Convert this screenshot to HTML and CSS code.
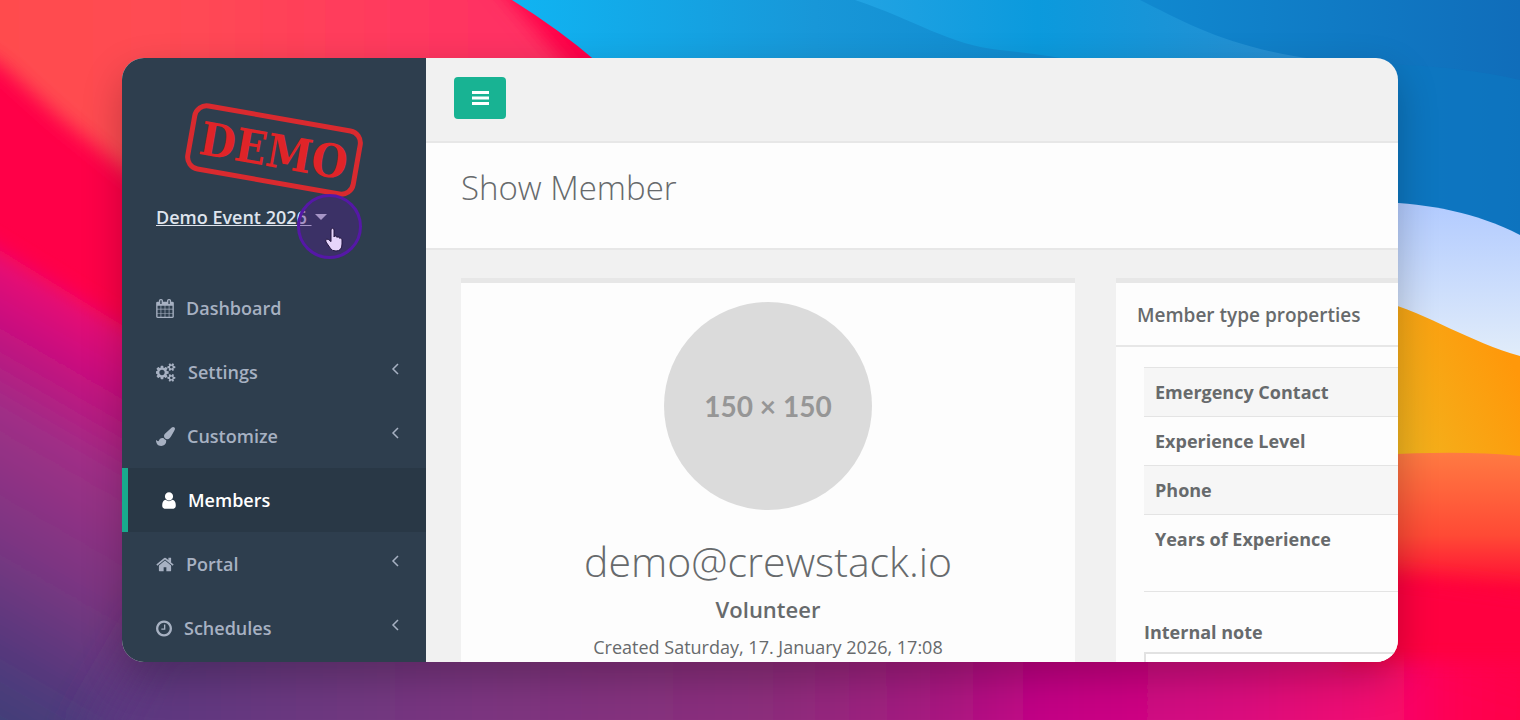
FILE: index.html
```
<!DOCTYPE html>
<html lang="en">
<head>
    <meta charset="UTF-8">
    <meta name="viewport" content="width=device-width, initial-scale=1">
    <title>Show Member</title>
    <link rel="stylesheet" href="styles.css">
</head>
<body>
<div class="desktop">
    <svg class="wallpaper" viewBox="0 0 1520 720" preserveAspectRatio="none" aria-hidden="true">
        <defs>
            <linearGradient id="blue" x1="512" y1="0" x2="1520" y2="0" gradientUnits="userSpaceOnUse">
                <stop offset="0" stop-color="#10b4f2"/>
                <stop offset=".3" stop-color="#1897d8"/>
                <stop offset=".6" stop-color="#0e86cc"/>
                <stop offset="1" stop-color="#1070bd"/>
            </linearGradient>
            <linearGradient id="wave" x1="855" y1="0" x2="1310" y2="0" gradientUnits="userSpaceOnUse">
                <stop offset="0" stop-color="#22a3e3"/>
                <stop offset=".4" stop-color="#0b9add"/>
                <stop offset="1" stop-color="#2a8dd0"/>
            </linearGradient>
            <linearGradient id="deep" x1="1140" y1="0" x2="1520" y2="0" gradientUnits="userSpaceOnUse">
                <stop offset="0" stop-color="#1089d0"/>
                <stop offset="1" stop-color="#106dba"/>
            </linearGradient>
            <linearGradient id="ice" x1="0" y1="203" x2="0" y2="350" gradientUnits="userSpaceOnUse">
                <stop offset="0" stop-color="#b2cbff"/>
                <stop offset="1" stop-color="#dfebfa"/>
            </linearGradient>
            <linearGradient id="orange" x1="1390" y1="440" x2="1520" y2="380" gradientUnits="userSpaceOnUse">
                <stop offset="0" stop-color="#f2b41e"/>
                <stop offset="1" stop-color="#ff980a"/>
            </linearGradient>
            <linearGradient id="coral" x1="0" y1="453" x2="0" y2="590" gradientUnits="userSpaceOnUse">
                <stop offset="0" stop-color="#ff7a42"/>
                <stop offset=".6" stop-color="#ff4a35"/>
                <stop offset="1" stop-color="#ff0636"/>
            </linearGradient>
            <linearGradient id="rose" x1="0" y1="0" x2="500" y2="0" gradientUnits="userSpaceOnUse">
                <stop offset="0" stop-color="#ff4c4e"/>
                <stop offset=".3" stop-color="#ff4c52"/>
                <stop offset="1" stop-color="#ff3163"/>
            </linearGradient>
            <!-- runs across the folds, which fall about 35 degrees to the right -->
            <linearGradient id="folds" x1="0" y1="240" x2="-213" y2="609" gradientUnits="userSpaceOnUse">
                <stop offset="0" stop-color="#f4086c"/>
                <stop offset=".12" stop-color="#d40a7c"/>
                <stop offset=".2" stop-color="#c01480"/>
                <stop offset=".34" stop-color="#a02e86"/>
                <stop offset=".6" stop-color="#7c3682"/>
                <stop offset=".84" stop-color="#54397c"/>
                <stop offset="1" stop-color="#3f4078"/>
            </linearGradient>
            <linearGradient id="floor" x1="0" y1="0" x2="1520" y2="0" gradientUnits="userSpaceOnUse">
                <stop offset="0" stop-color="#453c75"/>
                <stop offset=".06" stop-color="#583980"/>
                <stop offset=".3" stop-color="#7a3680"/>
                <stop offset=".52" stop-color="#8e2c7c"/>
                <stop offset=".62" stop-color="#a81880"/>
                <stop offset=".68" stop-color="#c20486"/>
                <stop offset=".8" stop-color="#d60880"/>
                <stop offset=".91" stop-color="#f40a70"/>
                <stop offset=".95" stop-color="#ff0054"/>
                <stop offset="1" stop-color="#ff0048"/>
            </linearGradient>
            <filter id="soft" x="-20%" y="-20%" width="140%" height="140%">
                <feGaussianBlur stdDeviation="10"/>
            </filter>
            <filter id="softer" x="-20%" y="-50%" width="140%" height="200%">
                <feGaussianBlur stdDeviation="24"/>
            </filter>
        </defs>
        <rect width="1520" height="720" fill="#ff0048"/>
        <!-- magenta to indigo folds, bottom left -->
        <path filter="url(#soft)" fill="url(#folds)" d="M-60 212L0 250L122 325L700 660L700 800L-60 800Z"/>
        <path filter="url(#softer)" fill="url(#floor)" d="M160 620L1360 620L1600 690L1600 860L90 860L90 740Z"/>
        <!-- red sheet, top left -->
        <path filter="url(#soft)" fill="url(#rose)" d="M-40 -40L478 -40L575 75L400 260L135 178L60 118L0 64L-40 40Z"/>
        <!-- blue sheet and its waves -->
        <path fill="url(#blue)" d="M512 0Q560 30 597 62L900 300L1520 300L1520 0Z"/>
        <path fill="url(#wave)" d="M855 0C915 20 950 45 1000 50Q1040 54 1085 62L1330 62L1520 0Z"/>
        <path fill="url(#deep)" d="M1140 0C1190 25 1230 48 1320 60L1400 240L1520 240L1520 0Z"/>
        <path fill="#0c78c2" opacity=".6" d="M1380 64Q1460 66 1520 80L1520 240L1380 240Z"/>
        <path fill="url(#ice)" d="M1380 202C1430 204 1475 212 1520 235L1520 370L1380 330Z"/>
        <path fill="url(#orange)" d="M1380 300C1430 315 1470 342 1520 356L1520 470L1380 470Z"/>
        <path fill="url(#coral)" d="M1380 455Q1460 450 1520 456L1520 600L1380 600Z"/>
        <path filter="url(#soft)" fill="#ff0040" d="M1340 570L1440 582L1560 598L1560 660L1340 660Z"/>
    </svg>

    <div class="window">
        <nav class="sidebar">
            <div class="profile">
                <svg class="stamp" viewBox="0 0 180 96" role="img" aria-label="Demo">
                    <g transform="rotate(10 90 48)">
                        <rect x="6" y="16" width="168" height="64" rx="12" fill="none" stroke="#d92a2f" stroke-width="5"/>
                        <text class="stamp-text" x="90" y="65" text-anchor="middle">DEMO</text>
                    </g>
                </svg>
                <a class="event" href="#"><span class="event-name">Demo Event 2026&nbsp;</span><span class="caret"></span></a>
                <div class="spotlight">
                    <svg class="hand" viewBox="0 0 20 26" aria-hidden="true">
                        <path d="M7 3Q7 1.300 8.500 1.300T10 3V10Q10.300 9 11.500 9T12.900 10.400Q13.300 9.800 14.300 9.900T15.600 11.300Q16.200 10.900 17 11.200T18 12.800V17Q18 24 12 24Q8 24 6.500 21.500L2 15Q1.200 12.600 2.800 12.100Q4.500 11.900 7 14.600Z"/>
                    </svg>
                </div>
            </div>
            <ul class="menu">
                <li><a href="#">
                    <svg class="icon icon-calendar" viewBox="64 0 1664 1792"><path d="M192 1664h288v-288h-288v288zm352 0h320v-288h-320v288zm-352-352h288v-320h-288v320zm352 0h320v-320h-320v320zm-352-384h288v-288h-288v288zm736 736h320v-288h-320v288zm-384-736h320v-288h-320v288zm768 736h288v-288h-288v288zm-384-352h320v-320h-320v320zm-352-864v-288q0-13-9.500-22.500t-22.500-9.500h-64q-13 0-22.500 9.500t-9.500 22.500v288q0 13 9.500 22.500t22.500 9.500h64q13 0 22.500-9.500t9.500-22.500zm736 864h288v-320h-288v320zm-384-384h320v-288h-320v288zm384 0h288v-288h-288v288zm32-480v-288q0-13-9.500-22.500t-22.500-9.500h-64q-13 0-22.500 9.500t-9.500 22.500v288q0 13 9.500 22.500t22.500 9.500h64q13 0 22.500-9.500t9.500-22.500zm384-64v1280q0 52-38 90t-90 38h-1408q-52 0-90-38t-38-90v-1280q0-52 38-90t90-38h128v-96q0-66 47-113t113-47h64q66 0 113 47t47 113v96h384v-96q0-66 47-113t113-47h64q66 0 113 47t47 113v96h128q52 0 90 38t38 90z"/></svg>
                    <span>Dashboard</span>
                </a></li>
                <li><a href="#">
                    <svg class="icon icon-cogs" viewBox="0 0 1920 1792"><path d="M832 896q0-106-75-181t-181-75-181 75-75 181 75 181 181 75 181-75 75-181zm768 512q0-52-38-90t-90-38-90 38-38 90q0 53 37.500 90.500t90.500 37.500 90.500-37.500 37.500-90.500zm0-1024q0-52-38-90t-90-38-90 38-38 90q0 53 37.500 90.500t90.500 37.500 90.500-37.500 37.500-90.500zm-384 421v185q0 10-7 19.500t-16 10.500l-155 24q-11 35-32 76 34 48 90 115 7 11 7 20 0 12-7 19-23 30-82.500 89.500t-78.500 59.500q-11 0-21-7l-115-90q-37 19-77 31-11 108-23 155-7 24-30 24h-186q-11 0-20-7.500t-10-17.500l-23-153q-34-10-75-31l-118 89q-7 7-20 7-11 0-21-8-144-133-144-160 0-9 7-19 10-14 41-53t47-61q-23-44-35-82l-152-24q-10-1-17-9.500t-7-19.500v-185q0-10 7-19.500t16-10.500l155-24q11-35 32-76-34-48-90-115-7-11-7-20 0-12 7-20 22-30 82-89t79-59q11 0 21 7l115 90q34-18 77-32 11-108 23-154 7-24 30-24h186q11 0 20 7.500t10 17.500l23 153q34 10 75 31l118-89q8-7 20-7 11 0 21 8 144 133 144 160 0 8-7 19-12 16-42 54t-45 60q23 48 34 82l152 23q10 2 17 10.500t7 19.500zm640 533v140q0 16-149 31-12 27-30 52 51 113 51 138 0 4-4 7-122 71-124 71-8 0-46-47t-52-68q-20 2-30 2t-30-2q-14 21-52 68t-46 47q-2 0-124-71-4-3-4-7 0-25 51-138-18-25-30-52-149-15-149-31v-140q0-16 149-31 13-29 30-52-51-113-51-138 0-4 4-7 4-2 35-20t59-34 30-16q8 0 46 46.500t52 67.500q20-2 30-2t30 2q51-71 92-112l6-2q4 0 124 70 4 3 4 7 0 25-51 138 17 23 30 52 149 15 149 31zm0-1024v140q0 16-149 31-12 27-30 52 51 113 51 138 0 4-4 7-122 71-124 71-8 0-46-47t-52-68q-20 2-30 2t-30-2q-14 21-52 68t-46 47q-2 0-124-71-4-3-4-7 0-25 51-138-18-25-30-52-149-15-149-31v-140q0-16 149-31 13-29 30-52-51-113-51-138 0-4 4-7 4-2 35-20t59-34 30-16q8 0 46 46.500t52 67.500q20-2 30-2t30 2q51-71 92-112l6-2q4 0 124 70 4 3 4 7 0 25-51 138 17 23 30 52 149 15 149 31z"/></svg>
                    <span>Settings</span>
                    <svg class="arrow" viewBox="0 0 9 14"><path d="M7 1L2 6L7 11"/></svg>
                </a></li>
                <li><a href="#">
                    <svg class="icon icon-brush" viewBox="0 0 1792 1792"><path d="M1615 0q70 0 122.500 46.500t52.500 116.500q0 63-45 151-332 629-465 752-97 91-218 91-126 0-216.500-92.500t-90.500-219.500q0-128 92-212l638-579q59-54 130-54zm-909 1034q39 76 106.500 130t150.500 76l1 71q4 213-129.500 347t-348.500 134q-123 0-218-46.500t-152.500-127.500-86.500-183-29-220q7 5 41 30t62 44.500 59 36.500 46 17q41 0 55-37 25-66 57.500-112.500t69.500-76 88-47.500 103-25.500 125-10.500z"/></svg>
                    <span>Customize</span>
                    <svg class="arrow" viewBox="0 0 9 14"><path d="M7 1L2 6L7 11"/></svg>
                </a></li>
                <li class="active"><a href="#">
                    <svg class="icon icon-user" viewBox="256 0 1280 1792"><path d="M1536 1399q0 109-62.500 187t-150.500 78h-854q-88 0-150.500-78t-62.500-187q0-85 8.500-160.500t31.500-152 58.500-131 94-89 134.500-34.500q131 128 313 128t313-128q76 0 134.500 34.500t94 89 58.500 131 31.500 152 8.500 160.500zm-256-887q0 159-112.500 271.500t-271.500 112.500-271.500-112.500-112.500-271.500 112.500-271.500 271.500-112.500 271.500 112.500 112.500 271.500z"/></svg>
                    <span>Members</span>
                </a></li>
                <li><a href="#">
                    <svg class="icon icon-home" viewBox="64 0 1664 1792"><path d="M1472 992v480q0 26-19 45t-45 19h-384v-384h-256v384h-384q-26 0-45-19t-19-45v-480q0-1 .5-3t.5-3l575-474 575 474q1 2 1 6zm223-69l-62 74q-8 9-21 11h-3q-13 0-21-7l-692-577-692 577q-12 8-24 7-13-2-21-11l-62-74q-8-10-7-23.500t11-21.500l719-599q32-26 76-26t76 26l244 204v-195q0-14 9-23t23-9h192q14 0 23 9t9 23v408l219 182q10 8 11 21.500t-7 23.500z"/></svg>
                    <span>Portal</span>
                    <svg class="arrow" viewBox="0 0 9 14"><path d="M7 1L2 6L7 11"/></svg>
                </a></li>
                <li><a href="#">
                    <svg class="icon icon-clock" viewBox="128 0 1536 1792"><path d="M1024 544v448q0 14-9 23t-23 9h-320q-14 0-23-9t-9-23v-64q0-14 9-23t23-9h224v-352q0-14 9-23t23-9h64q14 0 23 9t9 23zm416 352q0-148-73-273t-198-198-273-73-273 73-198 198-73 273 73 273 198 198 273 73 273-73 198-198 73-273zm224 0q0 209-103 385.500t-279.500 279.500-385.500 103-385.500-103-279.500-279.500-103-385.500 103-385.500 279.500-279.500 385.500-103 385.500 103 279.500 279.500 103 385.500z"/></svg>
                    <span>Schedules</span>
                    <svg class="arrow" viewBox="0 0 9 14"><path d="M7 1L2 6L7 11"/></svg>
                </a></li>
            </ul>
        </nav>

        <main class="page">
            <div class="topbar">
                <button class="btn-menu" type="button" aria-label="Toggle menu">
                    <svg viewBox="0 0 17 14"><path d="M0 0h17v3H0zM0 5.500h17v3H0zM0 11h17v3H0z"/></svg>
                </button>
            </div>
            <header class="page-heading">
                <h1>Show Member</h1>
            </header>
            <div class="content">
                <section class="ibox member">
                    <div class="avatar">150 × 150</div>
                    <h2>demo@crewstack.io</h2>
                    <strong class="role">Volunteer</strong>
                    <p class="created">Created Saturday, 17. January 2026, 17:08</p>
                </section>
                <section class="ibox">
                    <h3 class="ibox-title">Member type properties</h3>
                    <div class="ibox-content">
                        <table class="properties">
                            <tr><th scope="row">Emergency Contact</th><td></td></tr>
                            <tr><th scope="row">Experience Level</th><td></td></tr>
                            <tr><th scope="row">Phone</th><td></td></tr>
                            <tr><th scope="row">Years of Experience</th><td></td></tr>
                        </table>
                        <hr>
                        <label for="note">Internal note</label>
                        <textarea id="note" rows="4"></textarea>
                    </div>
                </section>
            </div>
        </main>
    </div>
</div>
</body>
</html>
```
FILE: styles.css
```
*{
    margin:0;
    padding:0;
    box-sizing: border-box;
}
body{
    font-family: "Open Sans", "Liberation Sans", sans-serif;
    font-size: 18px;
    line-height: 24px;
    color: #676a6c;
}
a{
    color: inherit;
    text-decoration: none;
}

/* desktop: wallpaper and window share one grid cell */
.desktop{
    display: grid;
    grid-template: 100vh / 100%;
    overflow: hidden;
}
.wallpaper{
    grid-area: 1 / 1;
    width: 100%;
    height: 100%;
}
.window{
    grid-area: 1 / 1;
    display: flex;
    margin: 58px 122px;
    border-radius: 22px;
    overflow: hidden;
    background: #f1f1f1;
    box-shadow: 0 16px 40px rgba(0,0,0,.24);
}

/* sidebar */
.sidebar{
    flex: 0 0 304px;
    background: #2e3e4e;
    color: #a7b1c2;
    font-weight: 600;
}
.profile{
    position: relative;
    padding: 44px 34px 47px;
}
.stamp{
    display: block;
    width: 180px;
    height: 96px;
    margin: 0 auto 7px 28px;
}
.stamp-text{
    font-family: "DejaVu Serif Condensed", "DejaVu Serif", serif;
    font-size: 46px;
    font-weight: bold;
    fill: #e02428;
}
.event{
    display: flex;
    align-items: center;
    color: #dfe4ed;
}
.event-name{
    text-decoration: underline;
}
.caret{
    margin-left: 3px;
    border-top: 6px solid;
    border-left: 6px solid transparent;
    border-right: 6px solid transparent;
}
.spotlight{
    position: absolute;
    left: 175px;
    top: 136px;
    width: 65px;
    height: 65px;
    border: 3px solid #5518a6;
    border-radius: 50%;
    background: rgba(80,30,140,.4);
}
.hand{
    position: absolute;
    left: 24px;
    top: 30px;
    width: 20px;
    height: 26px;
    fill: #e6d5fb;
    stroke: #22163f;
    stroke-width: 1;
    overflow: visible;
}
.menu{
    list-style: none;
}
.menu a{
    display: flex;
    align-items: center;
    gap: 12px;
    padding: 20px 26px 20px 34px;
}
.menu .active{
    border-left: 6px solid #19aa8d;
    background: #293846;
    color: #fff;
}
.icon{
    height: 19px;
    fill: currentColor;
}
.icon-calendar, .icon-home{
    width: 18px;
}
.icon-cogs{
    width: 20px;
}
.icon-brush{
    width: 19px;
}
.icon-user{
    width: 14px;
}
.icon-clock{
    width: 16px;
}
.arrow{
    width: 9px;
    height: 14px;
    margin: 0 0 4px auto;
    fill: none;
    stroke: currentColor;
    stroke-width: 1.5;
}

/* page */
.page{
    flex: 1;
    min-width: 0;
    overflow: hidden;
}
.topbar{
    padding: 19px 28px 22px;
    border-bottom: 2px solid #e7e7e7;
}
.btn-menu{
    display: flex;
    align-items: center;
    justify-content: center;
    width: 52px;
    height: 42px;
    border: 0;
    border-radius: 4px;
    background: #18b393;
}
.btn-menu svg{
    width: 17px;
    height: 14px;
    fill: #fff;
}
.page-heading{
    padding: 25px 35px 40px;
    border-bottom: 2px solid #e7e7e7;
    background: #fdfdfd;
}
h1{
    font-size: 33px;
    line-height: 40px;
    font-weight: 300;
}
.content{
    display: grid;
    grid-template-columns: 614px minmax(614px, 1fr);
    gap: 41px;
    padding: 28px 35px;
}
.ibox{
    border-top: 5px solid #e7e7e7;
    background: #fdfdfd;
}
.member{
    display: flex;
    flex-direction: column;
    align-items: center;
    padding: 19px 28px;
}
.avatar{
    display: flex;
    align-items: center;
    justify-content: center;
    width: 208px;
    height: 208px;
    border-radius: 50%;
    background: #dbdbdb;
    color: #969696;
    font-family: Lato, sans-serif;
    font-size: 28px;
    font-weight: bold;
}
h2{
    margin-top: 24px;
    font-size: 41px;
    line-height: 54px;
    font-weight: 300;
}
.role{
    margin-top: 9px;
    font-size: 22px;
    font-weight: 600;
}
.created{
    margin-top: 14px;
}
.ibox-title{
    padding: 20px 21px 18px;
    border-bottom: 2px solid #e7e7e7;
    font-size: 19px;
    font-weight: 600;
}
.ibox-content{
    padding: 20px 28px;
}
.properties{
    width: 100%;
    border-collapse: collapse;
}
.properties tr{
    border-top: 1px solid #e4e4e4;
}
.properties tr:nth-child(odd){
    background: #f6f6f6;
}
.properties th{
    padding: 12px 11px;
    text-align: left;
}
hr{
    margin: 28px 0;
    border: 0;
    border-top: 1px solid #e4e4e4;
}
label{
    display: block;
    margin-bottom: 8px;
    font-weight: bold;
}
textarea{
    display: block;
    width: 100%;
    padding: 8px 16px;
    border: 2px solid #e2e2e2;
    background: #fff;
    font: inherit;
    color: inherit;
}
```
